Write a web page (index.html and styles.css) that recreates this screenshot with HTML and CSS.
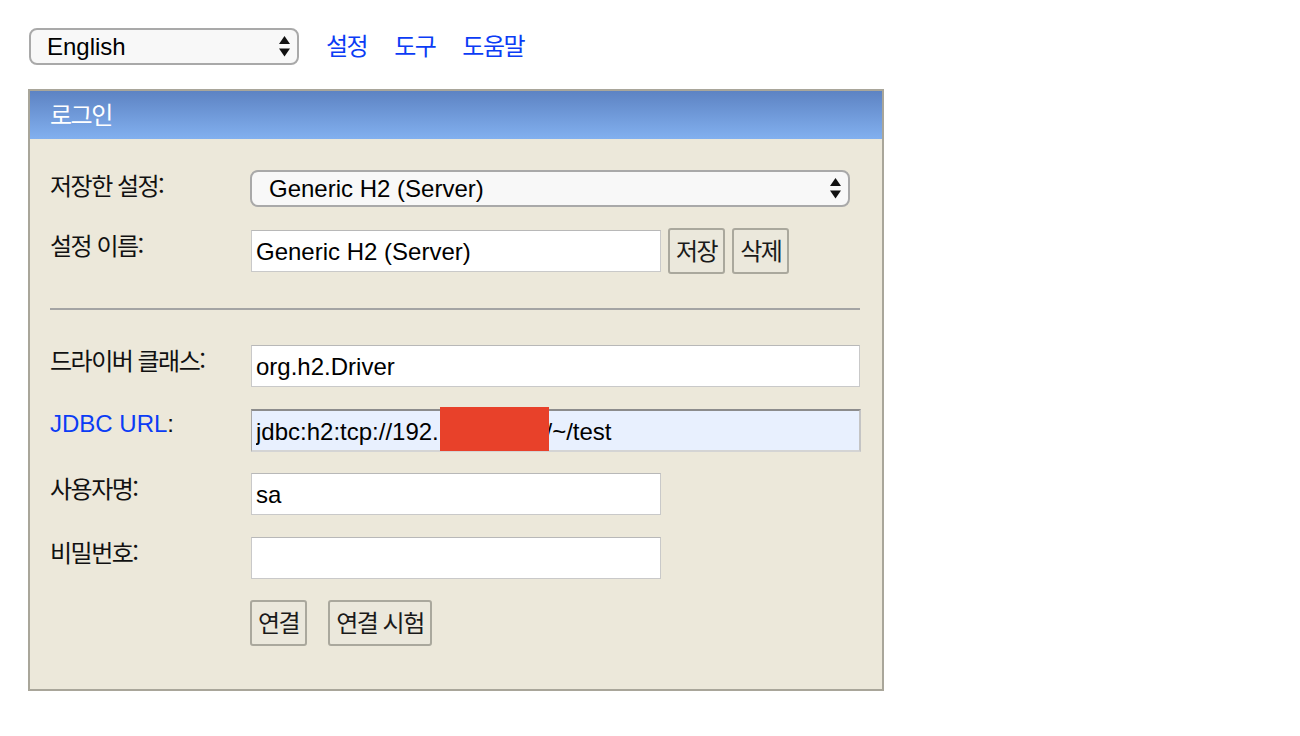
FILE: index.html
```html
<!DOCTYPE html>
<html lang="ko">
<head>
<meta charset="utf-8">
<title>H2 Console</title>
<link rel="stylesheet" href="styles.css">
</head>
<body>
<div class="top">
  <div class="sel sel-lang">
    <select><option>English</option></select>
    <svg class="arrows" width="11" height="21" viewBox="0 0 11 21"><path d="M5.5 0 L11 8 L0 8 Z M0 12.5 L11 12.5 L5.5 20.5 Z" fill="#111"/></svg>
  </div>
  <nav class="links ko">
    <a href="#">설정</a>
    <a href="#">도구</a>
    <a href="#">도움말</a>
  </nav>
</div>

<div class="login">
  <div class="head ko">로그인</div>
  <div class="body">
    <div class="row">
      <label class="lbl ko">저장한 설정:</label>
      <div class="sel sel-wide">
        <select><option>Generic H2 (Server)</option></select>
        <svg class="arrows" width="11" height="21" viewBox="0 0 11 21"><path d="M5.5 0 L11 8 L0 8 Z M0 12.5 L11 12.5 L5.5 20.5 Z" fill="#111"/></svg>
      </div>
    </div>
    <div class="row row-btn">
      <label class="lbl lbl-btn ko">설정 이름:</label>
      <div class="ctl">
        <input class="inp w-short" type="text" value="Generic H2 (Server)">
        <button class="btn ko">저장</button>
        <button class="btn ko">삭제</button>
      </div>
    </div>
    <hr class="sep">
    <div class="row">
      <label class="lbl ko">드라이버 클래스:</label>
      <input class="inp w-long" type="text" value="org.h2.Driver">
    </div>
    <div class="row row-tight">
      <label class="lbl"><a class="jdbc" href="#">JDBC URL</a>:</label>
      <div class="mask-wrap">
        <input class="inp w-long auto" type="text" value="jdbc:h2:tcp://192.                /~/test">
        <span class="mask"></span>
      </div>
    </div>
    <div class="row">
      <label class="lbl ko">사용자명:</label>
      <input class="inp w-short" type="text" value="sa">
    </div>
    <div class="row row-tight">
      <label class="lbl ko">비밀번호:</label>
      <input class="inp w-short" type="password" value="">
    </div>
    <div class="row row-actions">
      <span class="lbl"></span>
      <div class="actions">
        <button class="btn ko">연결</button>
        <button class="btn ko">연결 시험</button>
      </div>
    </div>
  </div>
</div>
</body>
</html>
```

FILE: styles.css
```css
* { box-sizing: border-box; }

html, body {
  margin: 0;
  padding: 0;
  background: #ffffff;
}

body {
  font-family: "Liberation Sans", Arial, "Noto Sans CJK KR", sans-serif;
  font-size: 24px;
  color: #111;
  padding: 28px 0 0 28px;
}

.ko {
  font-family: "Noto Sans CJK KR", sans-serif;
  font-size: 24px;
  letter-spacing: -1.5px;
}

/* top bar */
.top {
  display: flex;
  align-items: flex-start;
  height: 38px;
  margin-left: 1px;
}

.sel {
  position: relative;
}

.sel select {
  appearance: none;
  -webkit-appearance: none;
  width: 100%;
  height: 100%;
  border: 2px solid #a9a9a9;
  border-radius: 8px;
  background: #f8f8f8;
  font-family: "Liberation Sans", Arial, sans-serif;
  font-size: 24px;
  color: #000;
  padding: 0 0 0 16px;
  margin: 0;
  outline: none;
}

.sel .arrows {
  position: absolute;
  right: 9px;
  top: 8px;
  pointer-events: none;
}

.sel-lang {
  width: 270px;
  height: 37px;
}

.links {
  display: flex;
  gap: 27px;
  margin-left: 27px;
  line-height: 34px;
}

.links a {
  color: #0b3cf5;
  text-decoration: none;
}

/* login box */
.login {
  margin-top: 23px;
  width: 856px;
  border: 2px solid #a9a69a;
  background: #ece8da;
}

.head {
  height: 48px;
  line-height: 45px;
  padding-left: 20px;
  color: #fff;
  background: linear-gradient(to bottom, #5d83c3, #82b0ef);
}

.body {
  padding: 31px 22px 43px 20px;
}

.row {
  display: flex;
  align-items: flex-start;
  margin-bottom: 22px;
}

.row:first-child {
  margin-bottom: 21px;
  height: 37px;
}

.row-tight {
  margin-bottom: 21px;
}

.row:last-child {
  margin-bottom: 0;
}

.lbl {
  width: 200px;
  flex: none;
  line-height: 29px;
  padding-top: 0;
}

.lbl-btn {
  padding-top: 2px;
}

.jdbc {
  color: #0b3cf5;
  text-decoration: none;
}

.sel-wide {
  width: 600px;
  height: 37px;
}

.sel-wide select {
  padding-left: 17px;
}

.ctl {
  display: flex;
  align-items: center;
  gap: 7px;
  height: 46px;
}

.ctl .btn:first-of-type {
  margin-left: 0;
}

.inp {
  height: 42px;
  margin: 0 0 0 1px;
  border: 1px solid #c9c9c9;
  border-top-color: #b8b8b8;
  background: #fff;
  font-family: "Liberation Sans", Arial, sans-serif;
  font-size: 24px;
  color: #000;
  padding: 2px 4px 0 4px;
  outline: none;
}

.w-short { width: 410px; }
.w-long { width: 610px; }

.auto {
  background: #e8f0fe;
  border-top: 2px solid #8c8c8c;
  border-left: 1px solid #a8a8a8;
  border-right: 2px solid #c4c4c4;
  border-bottom: 2px solid #d4d4d4;
  height: 43px;
}

.mask-wrap {
  position: relative;
}

.mask {
  position: absolute;
  left: 190px;
  top: -2px;
  width: 109px;
  height: 44px;
  background: #e8412a;
}

.btn {
  height: 46px;
  margin: 0;
  padding: 0 6px 2px 6px;
  border: 2px solid #aaa89d;
  border-radius: 3px;
  background: #ebe8dc;
  color: #1a1a1a;
  line-height: 40px;
}

.row-actions .lbl {
  height: 46px;
}

.actions {
  display: flex;
  gap: 21px;
}

.sep {
  margin: 34px 0 35px 0;
  height: 0;
  border: none;
  border-top: 2px solid #a4a4a4;
  width: 810px;
}
```
